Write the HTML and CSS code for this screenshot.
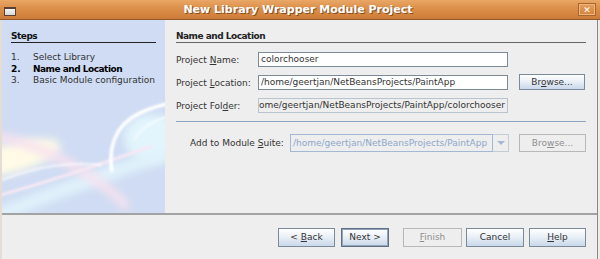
FILE: index.html
```html
<!DOCTYPE html>
<html lang="en">
<head>
    <meta charset="UTF-8">
    <title>New Library Wrapper Module Project</title>
    <link rel="stylesheet" href="styles.css">
</head>
<body>

<div class="window">
    <div class="titlebar">
        <span class="win-icon"></span>
        <span class="title">New Library Wrapper Module Project</span>
        <span class="close-btn">&#x2715;</span>
    </div>

    <div class="frame">
        <div class="main">
            <!-- Steps panel -->
            <div class="steps">
                <svg class="swirl" width="163" height="193" viewBox="0 0 163 193">
                    <defs>
                        <filter id="soft" x="-50%" y="-50%" width="200%" height="200%"><feGaussianBlur stdDeviation="4"/></filter>
                        <filter id="soft2" x="-50%" y="-50%" width="200%" height="200%"><feGaussianBlur stdDeviation="1.2"/></filter>
                    </defs>
                    <ellipse cx="150" cy="118" rx="28" ry="24" fill="#e2f5fc" filter="url(#soft)"/>
                    <path d="M-10 198 Q 70 165 170 132" stroke="#e0f2fb" stroke-width="14" fill="none" filter="url(#soft)"/>
                    <ellipse cx="10" cy="138" rx="50" ry="15" transform="rotate(-15 10 138)" fill="#fffbe6" filter="url(#soft)"/>
                    <path d="M-5 116 Q 40 126 78 150 T 125 188" stroke="#f8e2ef" stroke-width="9" fill="none" filter="url(#soft)"/>
                    <path d="M-5 176 Q 60 158 150 126" stroke="#f6e8f4" stroke-width="3" fill="none" filter="url(#soft2)"/>
                    <path d="M165 84 Q 128 92 116 112 Q 106 130 110 152" stroke="#ffffff" stroke-width="3.5" fill="none" filter="url(#soft2)"/>
                    <path d="M165 97 Q 142 103 132 120" stroke="#f4fbff" stroke-width="2" fill="none" filter="url(#soft2)"/>
                    <path d="M0 160 Q 50 140 100 145" stroke="#ffffff" stroke-width="2" fill="none" opacity="0.7" filter="url(#soft2)"/>
                </svg>
                <div class="steps-head">Steps</div>
                <ol class="step-list">
                    <li><span class="num">1.</span>Select Library</li>
                    <li class="current"><span class="num">2.</span>Name and Location</li>
                    <li><span class="num">3.</span>Basic Module configuration</li>
                </ol>
            </div>

            <!-- Name and Location panel -->
            <div class="panel">
                <div class="panel-head">Name and Location</div>
                <div class="form">
                    <span class="label">Project <u>N</u>ame:</span>
                    <div class="field">colorchooser</div>
                    <span></span>

                    <span class="label">Project <u>L</u>ocation:</span>
                    <div class="field">/home/geertjan/NetBeansProjects/PaintApp</div>
                    <button class="btn browse">Br<u>o</u>wse...</button>

                    <span class="label">Project Fol<u>d</u>er:</span>
                    <div class="field readonly"><span>/home/geertjan/NetBeansProjects/PaintApp/colorchooser</span></div>
                    <span></span>
                </div>
                <div class="rule"></div>
                <div class="suite-row">
                    <span class="label suite-label">Add to Module <u>S</u>uite:</span>
                    <div class="combo">
                        <div class="combo-text">/home/geertjan/NetBeansProjects/PaintApp</div>
                        <div class="combo-arrow"><span class="tri"></span></div>
                    </div>
                    <button class="btn browse disabled">Bro<u>w</u>se...</button>
                </div>
            </div>
        </div>

        <!-- Wizard buttons -->
        <div class="footer">
            <button class="btn back">&lt; <u>B</u>ack</button>
            <button class="btn next default">Next &gt;</button>
            <button class="btn finish disabled"><u>F</u>inish</button>
            <button class="btn cancel">Cancel</button>
            <button class="btn help"><u>H</u>elp</button>
        </div>
    </div>
</div>

</body>
</html>
```

FILE: styles.css
```css
/* Page */
body {
    margin: 0;
    width: 600px;
    height: 259px;
    overflow: hidden;
    background: #efebe7;
    font-family: "DejaVu Sans", sans-serif;
    font-size: 9px;
    color: #333;
}

u {
    text-decoration: underline;
    text-underline-offset: 1px;
}

.window {
    width: 600px;
    height: 259px;
    display: flex;
    flex-direction: column;
}

/* Title bar */
.titlebar {
    position: relative;
    height: 20px;
    box-sizing: border-box;
    background: linear-gradient(#e9a766, #dd914c 40%, #d4853f 75%, #cc7b39);
    border-bottom: 1px solid #93592a;
    text-align: center;
}

.title {
    display: block;
    line-height: 20px;
    font-weight: bold;
    font-size: 11px;
    color: #fff;
    text-shadow: 1px 1px 0 #8a4f20;
    padding-right: 4px;
}

.win-icon {
    position: absolute;
    left: 4px;
    top: 7px;
    width: 10px;
    height: 6px;
    border: 1px solid #5a4030;
    border-top-width: 2px;
    background: linear-gradient(#f4f4f4, #d8d8d8);
}

.close-btn {
    position: absolute;
    right: 4px;
    top: 3px;
    width: 18px;
    height: 13px;
    box-sizing: border-box;
    border: 1px solid #a8652d;
    box-shadow: inset 0 0 0 1px #f0b77a;
    background: linear-gradient(#e59e5a, #d38440);
    color: #fff;
    font-size: 9px;
    font-weight: bold;
    line-height: 12px;
    text-align: center;
}

/* Window frame */
.frame {
    flex: 1;
    display: flex;
    flex-direction: column;
    width: 598px;
    box-sizing: border-box;
    border-left: 2px solid #e5ddd4;
    border-right: 1px solid #8a8a8a;
    background: #eeeeee;
}

.main {
    height: 193px;
    display: flex;
}

/* Steps panel */
.steps {
    position: relative;
    width: 163px;
    flex: none;
    background: #cfdcf3;
    overflow: hidden;
    padding: 11px 9px 0 9px;
    box-sizing: border-box;
}

.swirl {
    position: absolute;
    left: 0;
    top: 0;
    z-index: 0;
}

.steps-head, .step-list {
    position: relative;
    z-index: 1;
}

.steps-head {
    font-weight: bold;
    letter-spacing: -0.5px;
    line-height: 11px;
    color: #111;
    border-bottom: 1px solid #222;
}

.step-list {
    list-style: none;
    margin: 9px 0 0 0;
    padding: 0;
    line-height: 11.7px;
    color: #333;
}

.step-list .num {
    display: inline-block;
    width: 22px;
}

.step-list .current {
    font-weight: bold;
    letter-spacing: -0.5px;
    color: #000;
}

.step-list .current .num {
    letter-spacing: 0;
}

/* Right panel */
.panel {
    flex: 1;
    padding: 11px 12px 0 11px;
}

.panel-head {
    font-weight: bold;
    letter-spacing: -0.5px;
    line-height: 11px;
    color: #222;
    border-bottom: 1px solid #666;
}

.form {
    display: grid;
    grid-template-columns: 82px 250px 77px;
    grid-auto-rows: 23px;
    align-items: center;
    margin-top: 5px;
}

.label {
    white-space: nowrap;
    color: #333;
}

.field {
    height: 15px;
    box-sizing: border-box;
    border: 1px solid #7a8a99;
    background: #fff;
    padding: 0 2px;
    line-height: 13px;
    white-space: nowrap;
    overflow: hidden;
}

.field.readonly {
    display: flex;
    justify-content: flex-end;
    background: #eeeeee;
    border-color: #b8c4d0;
}

.rule {
    height: 1px;
    background: #8ea4c4;
    margin-top: 4px;
}

.suite-row {
    display: flex;
    align-items: center;
    margin-top: 12px;
    padding-left: 14px;
}

.suite-label {
    width: 100px;
    flex: none;
}

.combo {
    display: flex;
    width: 219px;
    height: 18px;
    box-sizing: border-box;
    margin-right: 10px;
}

.combo-text {
    flex: 1;
    border: 1px solid #a2b8d4;
    background: #eeeeee;
    color: #8da7cb;
    padding: 0 2px;
    line-height: 16px;
    white-space: nowrap;
    overflow: hidden;
}

.combo-arrow {
    width: 15px;
    border: 1px solid #c4cbd2;
    border-left: none;
    background: #eeeeee;
    display: flex;
    align-items: center;
    justify-content: center;
}

.tri {
    width: 0;
    height: 0;
    border-left: 4px solid transparent;
    border-right: 4px solid transparent;
    border-top: 4px solid #a6b9d2;
}

/* Buttons */
.btn {
    display: block;
    height: 19px;
    box-sizing: border-box;
    padding: 0;
    border: 1px solid #7a8a99;
    background: linear-gradient(#ffffff, #eaf0f7 45%, #c9d8ea);
    font-family: "DejaVu Sans", sans-serif;
    font-size: 9px;
    line-height: 17px;
    text-align: center;
    white-space: pre;
    color: #333;
}

.btn.browse {
    width: 66px;
    height: 16px;
    line-height: 14px;
    margin-left: 11px;
    margin-top: -1px;
}

.suite-row .btn.browse {
    width: 67px;
    height: 18px;
    line-height: 16px;
    margin-left: 0;
    margin-top: 0;
}

.btn.disabled {
    background: #eeeeee;
    border-color: #b8b8b8;
    color: #8e8e8e;
}

.btn.default {
    border-color: #5d7085;
    box-shadow: inset 0 0 0 1px #91a4b8;
}

/* Footer */
.footer {
    flex: 1;
    display: flex;
    justify-content: flex-end;
    align-items: flex-start;
    border-top: 2px solid #a3a3a3;
    padding: 13px 11px 0 0;
}

.back { width: 57px; }
.next { width: 48px; margin-left: 6px; }
.finish { width: 59px; margin-left: 14px; }
.cancel { width: 58px; margin-left: 4px; }
.help { width: 57px; margin-left: 5px; }
```
